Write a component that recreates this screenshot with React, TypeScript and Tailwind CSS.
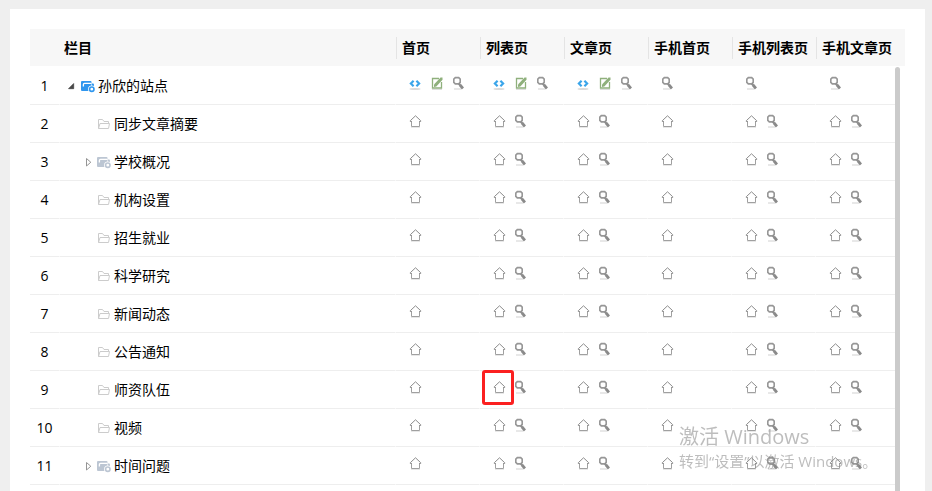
import React, { useState } from 'react';

type Action = 'code' | 'edit' | 'search' | 'home';

interface Row {
  id: number;
  name: string;
  kind: 'root' | 'group' | 'leaf';
}

const rows: Row[] = [
  { id: 1, name: '孙欣的站点', kind: 'root' },
  { id: 2, name: '同步文章摘要', kind: 'leaf' },
  { id: 3, name: '学校概况', kind: 'group' },
  { id: 4, name: '机构设置', kind: 'leaf' },
  { id: 5, name: '招生就业', kind: 'leaf' },
  { id: 6, name: '科学研究', kind: 'leaf' },
  { id: 7, name: '新闻动态', kind: 'leaf' },
  { id: 8, name: '公告通知', kind: 'leaf' },
  { id: 9, name: '师资队伍', kind: 'leaf' },
  { id: 10, name: '视频', kind: 'leaf' },
  { id: 11, name: '时间问题', kind: 'group' },
];

const columns: { title: string; root: Action[]; child: Action[] }[] = [
  { title: '首页', root: ['code', 'edit', 'search'], child: ['home'] },
  { title: '列表页', root: ['code', 'edit', 'search'], child: ['home', 'search'] },
  { title: '文章页', root: ['code', 'edit', 'search'], child: ['home', 'search'] },
  { title: '手机首页', root: ['search'], child: ['home'] },
  { title: '手机列表页', root: ['search'], child: ['home', 'search'] },
  { title: '手机文章页', root: ['search'], child: ['home', 'search'] },
];

const labels: Record<Action, string> = {
  code: '代码',
  edit: '编辑',
  search: '预览',
  home: '设置模板',
};

function ActionIcon({ action }: { action: Action }) {
  if (action === 'code') {
    return (
      <svg width="16" height="16" viewBox="0 0 16 16" fill="none" aria-hidden="true">
        <ellipse cx="8" cy="14" rx="5.5" ry="1" fill="#dadada" />
        <path d="M6.6 5.8L3.9 8.5l2.7 2.7M9.4 5.8l2.7 2.7-2.7 2.7" stroke="#3aa5ea" strokeWidth="2.2" />
      </svg>
    );
  }
  if (action === 'edit') {
    return (
      <svg width="17" height="16" viewBox="0 0 17 16" fill="none" aria-hidden="true">
        <path d="M4 14.5h10" stroke="#dedede" />
        <path d="M11 3.5H4.5V13h9V7" stroke="#8fb07c" strokeWidth="1.3" />
        <path d="M6 12V9.5l6.5-7h2v2.2l-6.2 6.8z" fill="#8fb07c" />
      </svg>
    );
  }
  if (action === 'search') {
    return (
      <svg width="16" height="16" viewBox="0 0 16 16" fill="none" aria-hidden="true">
        <path d="M4 14h7" stroke="#e0e0e0" strokeWidth="1.5" />
        <path d="M5.3 2.6h3.4l1.5 1.5v3.3L8.7 8.9H5.3L3.8 7.4V4.100z" stroke="#979797" strokeWidth="1.6" />
        <path d="M8.800 8.800l1.800 1.800" stroke="#8e8e8e" strokeWidth="2.200" />
        <path d="M10.200 10.200l2.700 3.300" stroke="#8a8a8a" strokeWidth="2.800" />
      </svg>
    );
  }
  return (
    <svg width="16" height="16" viewBox="0 0 16 16" fill="none" aria-hidden="true">
      <path d="M4 14.5h9" stroke="#e8e8e8" />
      <path d="M4.5 8v5.5h8V8" stroke="#a0a0a0" />
      <path d="M4.5 8.500H3.300v-.8L8.500 2.800l5.200 4.900v.8h-1.200" stroke="#8c8c8c" />
    </svg>
  );
}

function NodeIcon({ kind }: { kind: Row['kind'] }) {
  if (kind === 'leaf') {
    return (
      <svg width="16" height="16" viewBox="0 0 16 16" fill="none" aria-hidden="true">
        <path d="M2.5 12.5v-9h4l1.5 2h4.5v2M2.5 12.5l1.5-5h9.500l-1 5z" stroke="#cccccc" />
      </svg>
    );
  }
  const color = kind === 'root' ? '#2f96ee' : '#bcc6d3';
  return (
    <svg width="16" height="16" viewBox="0 0 16 16" fill="none" aria-hidden="true">
      <path d="M2 3h8.500a1 1 0 0 1 1 1v8a1 1 0 0 1-1 1H2a1 1 0 0 1-1-1V4a1 1 0 0 1 1-1z" fill={color} />
      <path d="M12 5.500h1a1 1 0 0 1 1 1V10h-2z" fill={color} />
      <path d="M3.400 8.500V6.600a1.200 1.200 0 0 1 1.200-1.200H11.500" stroke="#fff" strokeWidth="1.300" />
      <circle cx="11.800" cy="11.200" r="3.700" fill="#fff" />
      <circle cx="11.800" cy="11.200" r="2.200" stroke={color} strokeWidth="1.600" />
    </svg>
  );
}

function Arrow({ open }: { open: boolean }) {
  return (
    <svg width="16" height="16" viewBox="0 0 16 16" fill="none" aria-hidden="true">
      {open ? (
        <path d="M9.700 5.500v5.200H4.500z" fill="#484848" stroke="#333" strokeWidth="0.600" />
      ) : (
        <path d="M6.500 4.500v7.500l4.300-3.750z" stroke="#959595" />
      )}
    </svg>
  );
}

export default function App() {
  const [open, setOpen] = useState(true);
  const visible = open ? rows : rows.slice(0, 1);

  return (
    <div className="flex min-h-screen flex-col bg-[#efefef] pt-[9px] pr-[7px] pl-[10px] font-['Open_Sans','Noto_Sans_CJK_SC',sans-serif] text-sm text-black">
      <main className="flex flex-1 flex-col bg-white px-5 pt-5">
        <div className="relative flex-1">
          <table className="w-full table-fixed border-separate border-spacing-0">
            <colgroup>
              <col className="w-[30px]" />
              <col />
              <col className="w-[84px]" />
              <col className="w-[84px]" />
              <col className="w-[84px]" />
              <col className="w-[84px]" />
              <col className="w-[84px]" />
              <col className="w-[89px]" />
            </colgroup>
            <thead>
              <tr className="h-[38px] bg-[#f7f7f7] text-left">
                <td className="border-b border-white" />
                <th className="border-b border-white pl-1 font-bold">栏目</th>
                {columns.map(col => (
                  <th key={col.title} className="border-b border-white p-0 font-bold">
                    <div className="h-[22px] border-l border-[#e4e4e4] pl-[5px] leading-[22px] whitespace-nowrap">
                      {col.title}
                    </div>
                  </th>
                ))}
              </tr>
            </thead>
            <tbody>
              {visible.map(row => (
                <tr key={row.id} className="h-[38px]">
                  <td className="border-r border-b border-r-white border-b-[#eeeeee] p-0 text-center">{row.id}</td>
                  <td className="border-r border-b border-r-white border-b-[#eeeeee] p-0 pl-1">
                    <div className={`flex items-center ${row.kind === 'root' ? '' : 'pl-4'}`}>
                      {row.kind === 'leaf' ? (
                        <span className="w-4" />
                      ) : (
                        <button
                          aria-label={row.kind === 'root' && open ? '收起' : '展开'}
                          onClick={() => row.kind === 'root' && setOpen(!open)}
                        >
                          <Arrow open={row.kind === 'root' && open} />
                        </button>
                      )}
                      <NodeIcon kind={row.kind} />
                      <span className="pl-0.5">{row.name}</span>
                    </div>
                  </td>
                  {columns.map((col, i) => (
                    <td
                      key={col.title}
                      className="border-r border-b border-r-white border-b-[#eeeeee] p-0 pb-[5px] pl-[11px]"
                    >
                      <div className="flex items-center gap-[5px]">
                        {(row.kind === 'root' ? col.root : col.child).map(action => (
                          <button key={action} aria-label={`${row.name} ${col.title} ${labels[action]}`} className="relative">
                            <ActionIcon action={action} />
                            {row.id === 9 && i === 1 && action === 'home' && (
                              <span className="absolute -top-[9px] -left-[9px] h-[35px] w-8 rounded-[3px] border-[3px] border-[#fb2020]" />
                            )}
                          </button>
                        ))}
                      </div>
                    </td>
                  ))}
                </tr>
              ))}
            </tbody>
          </table>

          {/* Scroll bar */}
          <div className="absolute top-[38px] right-0 bottom-0 w-[10px] bg-white">
            <div className="h-full w-[5px] rounded-t-full bg-[#cbcbcb]" />
          </div>
        </div>
      </main>

      {/* System activation notice */}
      <div className="pointer-events-none fixed right-[53px] bottom-[18px] w-[200px] whitespace-nowrap text-[#868686]/55">
        <p className="text-[20px] leading-6">激活 Windows</p>
        <p className="text-[15px] leading-6">转到“设置”以激活 Windows。</p>
      </div>
    </div>
  );
}
